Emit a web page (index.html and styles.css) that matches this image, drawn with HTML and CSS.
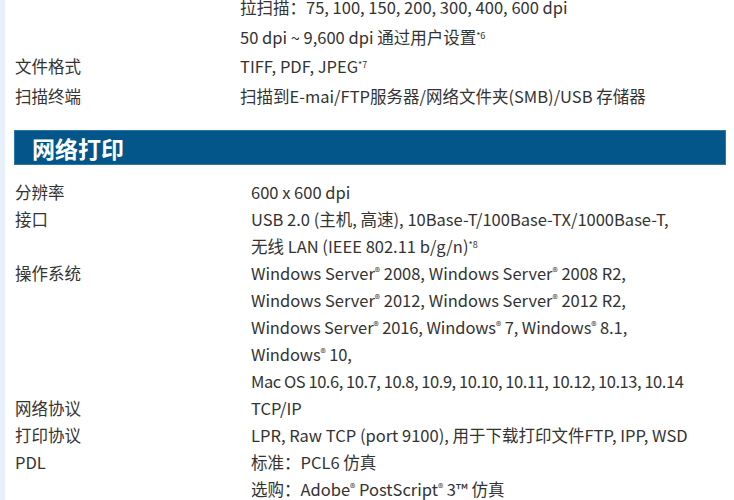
FILE: index.html
```html
<!DOCTYPE html>
<html lang="zh-CN">
<head>
  <meta charset="UTF-8">
  <title>规格 - 网络打印</title>
  <link rel="stylesheet" href="styles.css">
</head>
<body>
  <div class="page">
    <!-- Scan section (tail) -->
    <div class="spec spec-scan">
      <div class="spec-row">
        <div class="spec-label"></div>
        <div class="spec-value">
          <div>拉扫描：75, 100, 150, 200, 300, 400, 600 dpi</div>
          <div>50 dpi ~ 9,600 dpi 通过用户设置<sup>*6</sup></div>
        </div>
      </div>
      <div class="spec-row">
        <div class="spec-label">文件格式</div>
        <div class="spec-value">TIFF, PDF, JPEG<sup>*7</sup></div>
      </div>
      <div class="spec-row">
        <div class="spec-label">扫描终端</div>
        <div class="spec-value">扫描到E-mai/FTP服务器/网络文件夹(SMB)/USB 存储器</div>
      </div>
    </div>

    <h2 class="section-title">网络打印</h2>

    <div class="spec spec-print">
      <div class="spec-row">
        <div class="spec-label">分辨率</div>
        <div class="spec-value">600 x 600 dpi</div>
      </div>
      <div class="spec-row">
        <div class="spec-label">接口</div>
        <div class="spec-value">
          <div>USB 2.0 (主机, 高速), 10Base-T/100Base-TX/1000Base-T,</div>
          <div>无线 LAN (IEEE 802.11 b/g/n)<sup>*8</sup></div>
        </div>
      </div>
      <div class="spec-row">
        <div class="spec-label">操作系统</div>
        <div class="spec-value">
          <div>Windows Server<sup class="reg">®</sup> 2008, Windows Server<sup class="reg">®</sup> 2008 R2,</div>
          <div>Windows Server<sup class="reg">®</sup> 2012, Windows Server<sup class="reg">®</sup> 2012 R2,</div>
          <div class="tight">Windows Server<sup class="reg">®</sup> 2016, Windows<sup class="reg">®</sup> 7, Windows<sup class="reg">®</sup> 8.1,</div>
          <div class="tight">Windows<sup class="reg">®</sup> 10,</div>
          <div class="tighter">Mac OS 10.6, 10.7, 10.8, 10.9, 10.10, 10.11, 10.12, 10.13, 10.14</div>
        </div>
      </div>
      <div class="spec-row">
        <div class="spec-label">网络协议</div>
        <div class="spec-value">TCP/IP</div>
      </div>
      <div class="spec-row">
        <div class="spec-label">打印协议</div>
        <div class="spec-value">LPR, Raw TCP (port 9100), 用于下载打印文件FTP, IPP, WSD</div>
      </div>
      <div class="spec-row">
        <div class="spec-label">PDL</div>
        <div class="spec-value">
          <div>标准：PCL6 仿真</div>
          <div>选购：Adobe<sup class="reg">®</sup> PostScript<sup class="reg">®</sup> 3™ 仿真</div>
        </div>
      </div>
    </div>
  </div>
</body>
</html>
```

FILE: styles.css
```css
/* Base */
body {
  margin: 0;
  padding: 0;
  background-color: #ffffff;
  color: #333333;
  font-family: "Noto Sans CJK SC", "Noto Sans", sans-serif;
  font-size: 16.5px;
}

.page {
  border-left: 5px solid #e7f0fb;
  padding: 0 8px 0 9px;
  min-height: 500px;
  box-sizing: border-box;
}

/* Spec tables */
.spec-row {
  display: flex;
}

.spec-label {
  flex: 0 0 auto;
  padding-left: 1px;
}

.spec-value {
  flex: 1 1 auto;
  white-space: nowrap;
}

.spec-scan {
  margin-top: -7px;
  line-height: 29.5px;
}

.spec-scan .spec-label {
  width: 225px;
}

.spec-print {
  margin-top: 14px;
  line-height: 27px;
}

.spec-print .spec-label {
  width: 236px;
}

.tight {
  letter-spacing: -0.1px;
}

.tighter {
  letter-spacing: -0.45px;
}

sup {
  font-size: 9px;
  line-height: 0;
  vertical-align: 5px;
}

sup.reg {
  font-size: 11px;
  vertical-align: 4px;
}

/* Section header */
.section-title {
  margin: 19px 0 0 0;
  height: 35px;
  padding-left: 17px;
  background-color: #03568a;
  border: 1px solid #2f78a6;
  color: #ffffff;
  font-size: 23px;
  font-weight: bold;
  line-height: 35px;
  box-sizing: border-box;
}
```
